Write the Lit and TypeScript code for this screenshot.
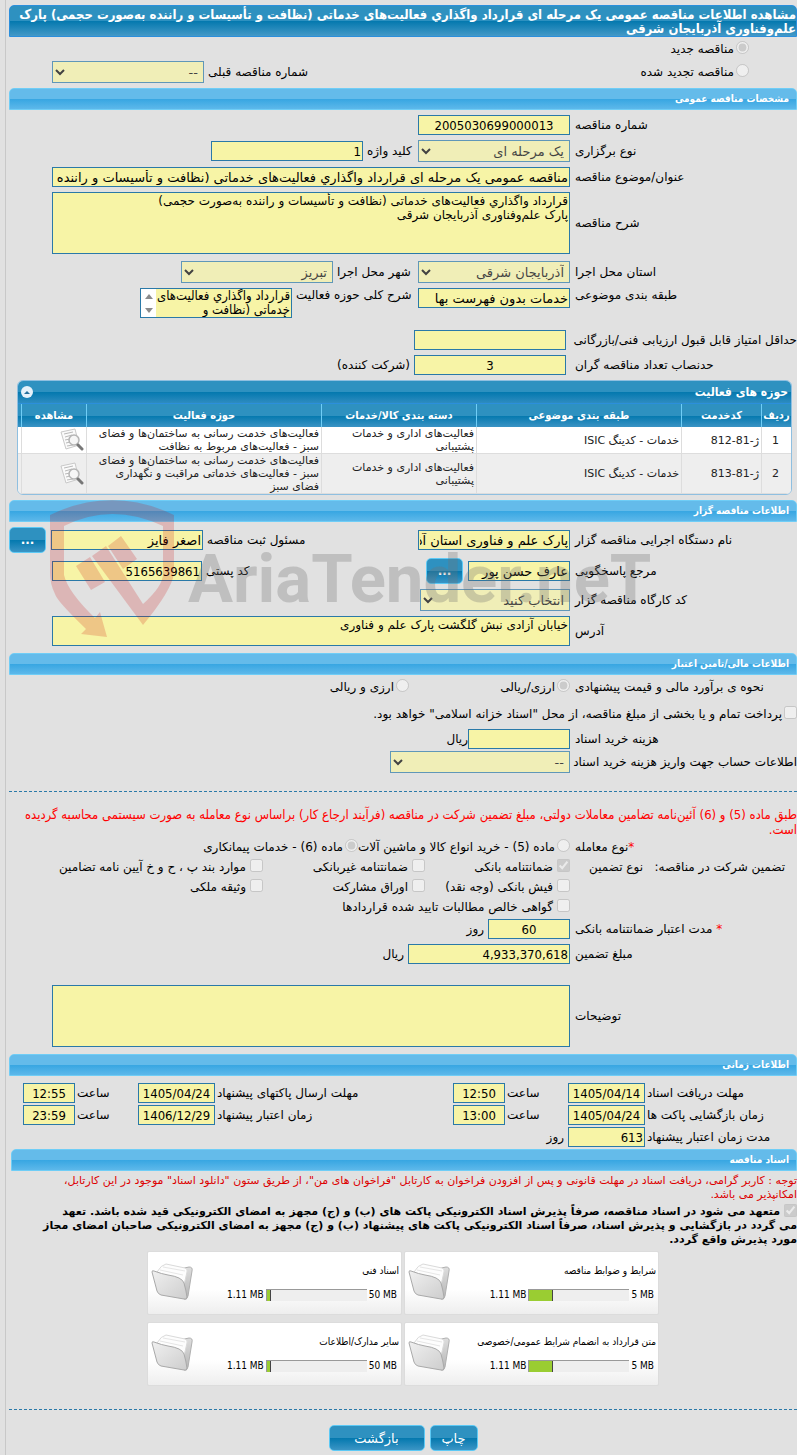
import { LitElement, html, css } from "lit";
import { customElement, property } from "lit/decorators.js";

const SUBJECT =
  "قرارداد واگذاري فعالیت‌های خدماتی (نظافت و تأسیسات و راننده به‌صورت حجمی)";
const PARK = "پارک علم‌وفناوری آذربایجان شرقی";

interface Activity {
  index: number;
  code: string;
  subject: string;
  category: string;
  field: string;
}

const activities: Activity[] = [
  {
    index: 1,
    code: "ژ-81-812",
    subject: "خدمات - کدینگ ISIC",
    category: "فعالیت‌های اداری و خدمات پشتیبانی",
    field: "فعالیت‌های خدمت رسانی به ساختمان‌ها و فضای سبز - فعالیت‌های مربوط به نظافت",
  },
  {
    index: 2,
    code: "ژ-81-813",
    subject: "خدمات - کدینگ ISIC",
    category: "فعالیت‌های اداری و خدمات پشتیبانی",
    field: "فعالیت‌های خدمت رسانی به ساختمان‌ها و فضای سبز - فعالیت‌های خدماتی مراقبت و نگهداری فضای سبز",
  },
];

interface Upload {
  title: string;
  used: number;
  limit: number;
}

const uploads: Upload[] = [
  { title: "شرایط و ضوابط مناقصه", used: 1.11, limit: 5 },
  { title: "اسناد فنی", used: 1.11, limit: 50 },
  { title: "متن قرارداد به انضمام شرایط عمومی/خصوصی", used: 1.11, limit: 5 },
  { title: "سایر مدارک/اطلاعات", used: 1.11, limit: 50 },
];

const folderIcon = html`
  <svg class="folder" viewBox="0 0 44 42" aria-hidden="true">
    <defs>
      <linearGradient id="front" x1="0" y1="0" x2="1" y2="1">
        <stop offset="0" stop-color="#f0f0f0" />
        <stop offset="1" stop-color="#cdcdcd" />
      </linearGradient>
      <linearGradient id="side" x1="0" y1="0" x2="0" y2="1">
        <stop offset="0" stop-color="#dedede" />
        <stop offset="1" stop-color="#b4b4b4" />
      </linearGradient>
    </defs>
    <path d="M29 7l9-2q4 0 3 4l-4 25q-1 4-4 3z" fill="url(#side)" stroke="#b0b0b0" />
    <path d="M6 10q4-7 9-8l19 4q3 1 2 4l-3 13z" fill="#fdfdfd" stroke="#dadada" />
    <path d="M9 8l23 5M12 5l22 4" stroke="#e6e6e6" fill="none" />
    <path
      d="M1 10q0-2 2-1q8 3 14 4q14 2 16 8q2 7 3 14q0 3-3 2L10 33q-3-1-4-4z"
      fill="url(#front)"
      stroke="#a9a9a9"
    />
  </svg>
`;

const viewIcon = html`
  <svg class="view-icon" viewBox="0 0 24 24" aria-hidden="true">
    <path d="M1 4l14-3 4 16-13 4z" fill="#fafafa" stroke="#c9c9c9" />
    <path d="M4 6l9-2M5 9l7-2M5 12l5-1M6 15l4-1M7 18l6-1" stroke="#b9b9b9" fill="none" />
    <circle cx="14" cy="12" r="5" fill="#f4f4f4" fill-opacity=".85" stroke="#b5b5b5" stroke-width="1.500" />
    <path d="M18 17l4 4" stroke="#777" stroke-width="3" stroke-linecap="round" />
  </svg>
`;

@customElement("section-bar")
export class SectionBar extends LitElement {
  @property() heading = "";

  static styles = css`
    :host {
      display: block;
      margin-top: 5px;
    }
    .bar {
      box-sizing: border-box;
      height: 22px;
      margin: 0;
      padding: 0 7px;
      border: 1px solid #6fcdf6;
      border-radius: 5px 5px 0 0;
      background: linear-gradient(#64bbea 0 50%, #37a6e2 50%, #5db8ea 100%);
      color: #fff;
      font-size: 10px;
      font-family: "DejaVu Sans Condensed", "DejaVu Sans", sans-serif;
      font-weight: bold;
      line-height: 20px;
    }
  `;

  render() {
    return html`<h2 class="bar">${this.heading}</h2>`;
  }
}

@customElement("app-root")
export class AppRoot extends LitElement {
  static styles = css`
    :host {
      --narrow: "DejaVu Sans Condensed", "DejaVu Sans", sans-serif;
      display: block;
      box-sizing: border-box;
      min-height: 100vh;
      padding-left: 5px;
      background: #e1e1e1;
      color: #000;
      direction: rtl;
      font-family: "DejaVu Sans", sans-serif;
      font-size: 12px;
    }
    .page {
      position: relative;
      box-sizing: border-box;
      min-height: 100vh;
      padding: 5px 0 5px 3px;
      border-left: 1px solid #c8c8c8;
      overflow: hidden;
    }
    .title {
      box-sizing: border-box;
      min-height: 32px;
      margin: 0;
      padding: 2px 0 0;
      border: 1px solid #2b8fdc;
      border-radius: 5px 5px 0 0;
      background: linear-gradient(#2e91c0 0 50%, #0378ae 50%, #4499c7 100%);
      color: #fff;
      font-family: var(--narrow);
      font-size: 13px;
      font-weight: bold;
      line-height: 14px;
    }
    .row {
      display: flex;
      align-items: center;
      min-height: 20px;
      margin-top: 5px;
      white-space: nowrap;
    }
    .top {
      align-items: flex-start;
    }
    .tight {
      margin-top: 2px;
    }
    .flat {
      margin-top: 0;
    }
    .loose {
      margin-top: 7px;
    }
    .wide {
      margin-top: 12px;
    }
    .spacious {
      margin-top: 21px;
    }
    .end {
      margin-bottom: 7px;
    }
    .lead {
      flex: none;
      width: 222px;
      margin-left: 5px;
      text-align: left;
    }
    .star {
      color: #f00;
    }
    .next {
      flex: none;
      margin-left: 4px;
      text-align: left;
    }
    .unit {
      margin-right: 4px;
    }
    .l51 {
      width: 51px;
    }
    .l82 {
      width: 81px;
    }
    .l122 {
      width: 122px;
    }
    .far {
      margin-right: auto;
    }
    input,
    select,
    textarea,
    button {
      box-sizing: border-box;
      font-family: inherit;
      margin: 0;
    }
    .box {
      flex: none;
      height: 20px;
      padding: 0 1px;
      border: 1px solid #2a79a8;
      border-radius: 0;
      background: #f7f4a6;
      color: #000;
      font-size: 13px;
      line-height: 14px;
      outline: none;
    }
    select.box {
      height: 22px;
    }
    textarea.box {
      display: block;
      resize: none;
      overflow: hidden;
      padding: 1px;
      font-size: 12px;
    }
    .scroll {
      box-sizing: border-box;
      display: flex;
      border: 1px solid #2a79a8;
    }
    .scroll textarea.box {
      flex: 1;
      min-width: 0;
      height: 28px;
      padding: 0 1px;
      border: 0;
      font-family: var(--narrow);
      font-size: 13px;
    }
    .track {
      display: flex;
      flex-direction: column;
      align-items: center;
      justify-content: space-between;
      box-sizing: border-box;
      width: 15px;
      padding: 5px 0 4px;
      background: #fff;
    }
    .arrow {
      width: 8px;
      height: 5px;
    }
    .center {
      text-align: center;
    }
    .number {
      font-family: var(--narrow);
    }
    .apart {
      margin-right: 4px;
    }
    .w82 {
      width: 82px;
    }
    .w102 {
      width: 102px;
    }
    .w150 {
      width: 150px;
    }
    .w152 {
      width: 152px;
    }
    .w162 {
      width: 162px;
    }
    .w180 {
      width: 180px;
    }
    .fill {
      flex: 1;
      min-width: 0;
      margin-left: 43px;
    }
    .h30 {
      height: 30px;
    }
    .h62 {
      height: 62px;
    }
    .edge {
      margin-left: 43px;
    }
    .tick {
      flex: none;
      width: 13px;
      height: 13px;
    }
    .option {
      display: flex;
      align-items: center;
      gap: 2px;
    }
    .option .tick {
      margin-bottom: 3px;
    }
    .currency .option {
      min-width: 161px;
    }
    .kind {
      padding-right: 48px;
    }
    .button {
      height: 26px;
      padding: 0;
      border: 1px solid #5cc9f5;
      border-radius: 5px;
      background: linear-gradient(#2e91c0 0 50%, #0378ae 50%, #3b95c5 100%);
      color: #fff;
      font-size: 13px;
    }
    .more {
      flex: none;
      width: 37px;
      margin-right: 5px;
      font-size: 12px;
      font-weight: bold;
    }
    .grid-panel {
      margin: 5px 5px 0 8px;
      border: 1px solid #8fbfe0;
      border-radius: 6px;
      overflow: hidden;
      background: #fff;
    }
    .grid-title {
      display: flex;
      align-items: center;
      justify-content: space-between;
      height: 22px;
      padding: 0 3px;
      border-bottom: 1px solid #2b8fdc;
      background: linear-gradient(#2e91c0 0 50%, #0378ae 50%, #2e8cc0 100%);
      color: #fff;
      font-family: var(--narrow);
      font-size: 12px;
      font-weight: bold;
    }
    .collapse {
      display: grid;
      place-items: center;
      width: 12px;
      height: 12px;
      padding: 0;
      border: 0;
      border-radius: 50%;
      background: #e6f1fa;
    }
    .collapse svg {
      width: 6px;
      height: 3px;
    }
    table {
      width: 100%;
      border-collapse: separate;
      border-spacing: 0;
      table-layout: fixed;
      font-size: 11px;
      line-height: 13px;
    }
    .grid-head {
      height: 23px;
      background: linear-gradient(#2e91c0 0 50%, #0378ae 50%, #3a93c4 100%);
      color: #fff;
      font-family: var(--narrow);
      line-height: 14px;
    }
    th {
      padding: 0;
      border-left: 1px solid #6fcdf6;
      white-space: nowrap;
    }
    td {
      padding: 0 2px 0 0;
      border-left: 1px solid #ddd;
      border-bottom: 1px solid #ddd;
      color: #222;
    }
    th:last-child,
    td:last-child {
      border-left: 0;
    }
    .even td {
      background: #eee;
    }
    .view-icon {
      display: block;
      width: 24px;
      height: 24px;
    }
    .c-index {
      width: 30px;
    }
    .c-code {
      width: 80px;
    }
    .c-subject {
      width: 205px;
    }
    .c-category {
      width: 155px;
    }
    .c-view {
      width: 65px;
    }
    .c-spare {
      width: 3px;
    }
    .rule {
      height: 0;
      margin: 0;
      border: 0;
      border-top: 1px dashed #2a79a8;
    }
    .account {
      margin-bottom: 18px;
    }
    .notice {
      margin: 15px 0 0;
      color: #f00;
      font-family: var(--narrow);
      font-size: 13px;
      line-height: 15px;
    }
    .caution {
      margin: 3px 0 2px;
      color: #d00;
      font-size: 11px;
      line-height: 14px;
    }
    .pledge {
      margin: 0 0 4px;
      font-size: 11px;
      font-weight: bold;
      line-height: 14px;
    }
    .pledge .tick {
      vertical-align: -2px;
    }
    .guarantee {
      display: grid;
      grid-template-columns: 137px 85px 145px 162px 1fr;
      grid-auto-rows: 20px;
      align-items: center;
      white-space: nowrap;
    }
    .guarantee-head {
      padding-right: 12px;
    }
    .guarantee-kind {
      padding-right: 17px;
    }
    .guarantee .option {
      margin-right: 5px;
      margin-left: -5px;
      gap: 4px;
    }
    .second {
      grid-column-start: 3;
    }
    .third {
      grid-column: 3 / -1;
    }
    .times {
      display: grid;
      grid-template-columns: 150px 77px 59px 52px 1fr 77px 59px 52px;
      gap: 2px;
      margin: 7px 0 0 14px;
      align-items: center;
      text-align: left;
      white-space: nowrap;
    }
    .times .number {
      width: 100%;
    }
    .times .plain {
      text-align: right;
    }
    .times .unit {
      text-align: right;
      margin-right: 2px;
    }
    .last-bar {
      margin-top: 2px;
      margin-left: 2px;
    }
    .files {
      display: grid;
      grid-template-columns: 255px 255px;
      justify-content: center;
      gap: 7px 2px;
      margin: 0 0 23px;
      padding: 0;
      list-style: none;
    }
    .card {
      display: flex;
      align-items: center;
      justify-content: space-between;
      box-sizing: border-box;
      height: 64px;
      padding: 0 2px 0 3px;
      border: 1px solid #dcdcdc;
      border-radius: 2px;
      background: linear-gradient(#fff 60%, #eee);
      font-family: var(--narrow);
      font-size: 10px;
    }
    .folder {
      flex: none;
      width: 44px;
      height: 42px;
    }
    .card-body {
      display: grid;
      gap: 13px;
      white-space: nowrap;
    }
    .usage {
      display: flex;
      align-items: center;
      gap: 2px;
      direction: ltr;
      justify-content: flex-end;
      margin-right: 2px;
      line-height: 12px;
    }
    .meter {
      box-sizing: border-box;
      width: 101px;
      height: 12px;
      border-top: 1px solid #999;
      border-left: 1px solid #999;
      background: #eee;
    }
    .level {
      box-sizing: border-box;
      height: 11px;
      border-right: 1px solid #444;
      background: #9acd32;
    }
    .actions {
      display: flex;
      justify-content: center;
      gap: 5px;
      margin-top: 15px;
    }
    .print {
      width: 48px;
    }
    .back {
      width: 96px;
    }
    .watermark {
      position: absolute;
      top: 500px;
      left: 44px;
      width: 620px;
      height: 144px;
      pointer-events: none;
      direction: ltr;
    }
    .watermark-text {
      font-family: Roboto, sans-serif;
      font-size: 67px;
      font-weight: bold;
    }
  `;

  private radio(id: string, name: string, text: string, checked = false) {
    return html`<span class="option"
      ><input class="tick" type="radio" id=${id} name=${name} ?checked=${checked} disabled /><label for=${id}
        >${text}</label
      ></span
    >`;
  }

  private check(id: string, text: string, checked = false, cls = "") {
    return html`<span class="option ${cls}"
      ><input class="tick" type="checkbox" id=${id} ?checked=${checked} disabled /><label for=${id}>${text}</label></span
    >`;
  }

  private label(id: string, text: string, cls = "lead") {
    return html`<label class=${cls} for=${id}>${text}</label>`;
  }

  private box(id: string, value: string, cls: string) {
    return html`<input class="box ${cls}" id=${id} type="text" .value=${value} readonly />`;
  }

  private drop(id: string, value: string, cls: string) {
    return html`<select class="box ${cls}" id=${id} disabled>
      <option>${value}</option>
    </select>`;
  }

  private more() {
    return html`<button class="button more" type="button" aria-label="انتخاب">...</button>`;
  }

  private renderActivities() {
    return html`<section class="grid-panel">
      <div class="grid-title">
        <span>حوزه های فعالیت</span>
        <button class="collapse" type="button" aria-label="بستن">
          <svg viewBox="0 0 6 3"><path d="M0 3L3 0l3 3z" fill="#256f9c" /></svg>
        </button>
      </div>
      <table>
        <colgroup>
          <col class="c-index" />
          <col class="c-code" />
          <col class="c-subject" />
          <col class="c-category" />
          <col />
          <col class="c-view" />
          <col class="c-spare" />
        </colgroup>
        <thead>
          <tr class="grid-head">
            <th>ردیف</th>
            <th>کدخدمت</th>
            <th>طبقه بندی موضوعی</th>
            <th>دسته بندی کالا/خدمات</th>
            <th>حوزه فعالیت</th>
            <th>مشاهده</th>
            <th></th>
          </tr>
        </thead>
        <tbody>
          ${activities.map(
            (a) => html`<tr class=${a.index % 2 ? "odd" : "even"}>
              <td class="center">${a.index}</td>
              <td>${a.code}</td>
              <td>${a.subject}</td>
              <td>${a.category}</td>
              <td>${a.field}</td>
              <td>${viewIcon}</td>
              <td></td>
            </tr>`
          )}
        </tbody>
      </table>
    </section>`;
  }

  private renderUpload(u: Upload) {
    return html`<li class="card">
      <div class="card-body">
        <span>${u.title}</span>
        <span class="usage">
          <span>${u.used} MB</span>
          <span class="meter"><div class="level" style="width:${Math.round((u.used / u.limit) * 100) + 2}%"></div></span>
          <span>${u.limit} MB</span>
        </span>
      </div>
      ${folderIcon}
    </li>`;
  }

  private renderWatermark() {
    return html`<svg class="watermark" viewBox="0 0 620 144" aria-hidden="true">
      <g fill="#c80000" fill-opacity=".19">
        <path
          d="M0 15Q62-15 124 15V73Q122 90 93 125L42 56 56 46 93 104Q113 86 113 74V26Q62 2 14 26V75Q18 92 45 118L50 112 57 137 31 134 36 129Q6 100 5 94Q0 84 0 73Z"
        />
        <path d="M26 66L40 57 55 82 41 90ZM58 46L71 36 87 59 73 69Z" />
      </g>
      <text class="watermark-text" x="138" y="102" fill="#707070" fill-opacity=".3">AriaTender.neT</text>
    </svg>`;
  }

  render() {
    return html`<main class="page">
      <h1 class="title">مشاهده اطلاعات مناقصه عمومی یک مرحله ای ${SUBJECT} ${PARK}</h1>

      <div class="row tight kind">${this.radio("new", "kind", "مناقصه جدید", true)}</div>
      <div class="row tight kind">
        ${this.radio("renewed", "kind", "مناقصه تجدید شده")} ${this.label("prev", "شماره مناقصه قبلی", "next far")}
        ${this.drop("prev", "--", "w152 edge")}
      </div>

      <section-bar heading="مشخصات مناقصه عمومی"></section-bar>
      <div class="row">
        ${this.label("number", "شماره مناقصه")} ${this.box("number", "2005030699000013", "w152 center number")}
      </div>
      <div class="row">
        ${this.label("type", "نوع برگزاری")} ${this.drop("type", "یک مرحله ای", "w152")}
        ${this.label("keyword", "کلید واژه", "next l51")} ${this.box("keyword", "1", "w152 number")}
      </div>
      <div class="row">
        ${this.label("subject", "عنوان/موضوع مناقصه")}
        ${this.box("subject", "مناقصه عمومی یک مرحله ای " + SUBJECT, "fill")}
      </div>
      <div class="row">
        ${this.label("description", "شرح مناقصه")}
        <textarea class="box fill h62" id="description" readonly .value=${SUBJECT + "\n" + PARK}></textarea>
      </div>
      <div class="row loose">
        ${this.label("province", "استان محل اجرا")} ${this.drop("province", "آذربایجان شرقی", "w152")}
        ${this.label("city", "شهر محل اجرا", "next l82")} ${this.drop("city", "تبریز", "w152")}
      </div>
      <div class="row top">
        ${this.label("category", "طبقه بندی موضوعی")} ${this.box("category", "خدمات بدون فهرست بها", "w152")}
        ${this.label("scope", "شرح کلی حوزه فعالیت", "next l122")}
        <div class="scroll w152">
          <textarea class="box" id="scope" readonly .value=${SUBJECT}></textarea>
          <span class="track">
            <svg class="arrow" viewBox="0 0 8 5"><path d="M0 5L4 0l4 5z" fill="#8b8b8b" /></svg>
            <svg class="arrow" viewBox="0 0 8 5"><path d="M0 0h8L4 5z" fill="#8b8b8b" /></svg>
          </span>
        </div>
      </div>
      <div class="row wide">
        ${this.label("score", "حداقل امتیاز قابل قبول ارزیابی فنی/بازرگانی")} ${this.box("score", "", "w152 apart")}
      </div>
      <div class="row">
        ${this.label("quorum", "حدنصاب تعداد مناقصه گران")} ${this.box("quorum", "3", "w152 apart center number")}
        <span class="unit">(شرکت کننده)</span>
      </div>

      ${this.renderActivities()}

      <section-bar heading="اطلاعات مناقصه گزار"></section-bar>
      <div class="row">
        ${this.label("agency", "نام دستگاه اجرایی مناقصه گزار")}
        ${this.box("agency", "پارک علم و فناوری استان آذربایجان شرقی", "w152")}
        ${this.label("registrar", "مسئول ثبت مناقصه", "next far")} ${this.box("registrar", "اصغر فایز", "w152")}
        ${this.more()}
      </div>
      <div class="row">
        ${this.label("contact", "مرجع پاسخگویی")} ${this.box("contact", "عارف حسن پور", "w102")} ${this.more()}
        ${this.label("postal", "کد پستی", "next far")} ${this.box("postal", "5165639861", "w150 edge number")}
      </div>
      <div class="row">
        ${this.label("workshop", "کد کارگاه مناقصه گزار")} ${this.drop("workshop", "انتخاب کنید", "w150")}
      </div>
      <div class="row end">
        ${this.label("address", "آدرس")}
        <textarea
          class="box fill h30"
          id="address"
          readonly
          .value=${"خیابان آزادی نبش گلگشت پارک علم و فناوری"}
        ></textarea>
      </div>

      <section-bar heading="اطلاعات مالی/تامین اعتبار"></section-bar>
      <div class="row tight currency">
        <span class="lead">نحوه ی برآورد مالی و قیمت پیشنهادی</span>
        ${this.radio("rial", "currency", "ارزی/ریالی", true)} ${this.radio("both", "currency", "ارزی و ریالی")}
      </div>
      <div class="row loose">
        ${this.check(
          "treasury",
          "پرداخت تمام و یا بخشی از مبلغ مناقصه، از محل \"اسناد خزانه اسلامی\" خواهد بود."
        )}
      </div>
      <div class="row">
        ${this.label("fee", "هزینه خرید اسناد")} ${this.box("fee", "", "w102")} <span>ریال</span>
      </div>
      <div class="row tight account">
        ${this.label("account", "اطلاعات حساب جهت واریز هزینه خرید اسناد")} ${this.drop("account", "--", "w180")}
      </div>
      <hr class="rule" />
      <p class="notice">
        طبق ماده (5) و (6) آئین‌نامه تضامین معاملات دولتی، مبلغ تضمین شرکت در مناقصه (فرآیند ارجاع کار) براساس نوع معامله
        به صورت سیستمی محاسبه گردیده است.
      </p>
      <div class="row flat">
        <span class="lead"><span class="star">*</span>نوع معامله</span>
        ${this.radio("m5", "deal", "ماده (5) - خرید انواع کالا و ماشین آلات")}
        ${this.radio("m6", "deal", "ماده (6) - خدمات پیمانکاری", true)}
      </div>
      <div class="guarantee">
        <span class="guarantee-head">تضمین شرکت در مناقصه:</span>
        <span class="guarantee-kind">نوع تضمین</span>
        ${this.check("g1", "ضمانتنامه بانکی", true)} ${this.check("g2", "ضمانتنامه غیربانکی")}
        ${this.check("g3", "موارد بند پ ، ح و خ آیین نامه تضامین")}
        ${this.check("g4", "فیش بانکی (وجه نقد)", false, "second")} ${this.check("g5", "اوراق مشارکت")}
        ${this.check("g6", "وثیقه ملکی")} ${this.check("g7", "گواهی خالص مطالبات تایید شده قراردادها", false, "third")}
      </div>
      <div class="row tight">
        <label class="lead" for="validity"><span class="star">*</span> مدت اعتبار ضمانتنامه بانکی</label>
        ${this.box("validity", "60", "w82 center number")} <span class="unit">روز</span>
      </div>
      <div class="row">
        ${this.label("amount", "مبلغ تضمین")} ${this.box("amount", "4,933,370,618", "w162 number")}
        <span class="unit">ریال</span>
      </div>
      <div class="row spacious end">
        ${this.label("notes", "توضیحات")}
        <textarea class="box fill h62" id="notes" readonly></textarea>
      </div>

      <section-bar heading="اطلاعات زمانی"></section-bar>
      <div class="times">
        ${this.label("t1", "مهلت دریافت اسناد", "")} ${this.box("t1", "1405/04/14", "center number")}
        ${this.label("h1", "ساعت", "")} ${this.box("h1", "12:50", "center number")}
        ${this.label("t2", "مهلت ارسال پاکتهای پیشنهاد", "")} ${this.box("t2", "1405/04/24", "center number")}
        ${this.label("h2", "ساعت", "")} ${this.box("h2", "12:55", "center number")}
        ${this.label("t3", "زمان بازگشایی پاکت ها", "")} ${this.box("t3", "1405/04/24", "center number")}
        ${this.label("h3", "ساعت", "")} ${this.box("h3", "13:00", "center number")}
        ${this.label("t4", "زمان اعتبار پیشنهاد", "")} ${this.box("t4", "1406/12/29", "center number")}
        ${this.label("h4", "ساعت", "")} ${this.box("h4", "23:59", "center number")}
        ${this.label("t5", "مدت زمان اعتبار پیشنهاد", "")} ${this.box("t5", "613", "plain number")}
        <span class="unit">روز</span>
      </div>

      <section-bar class="last-bar" heading="اسناد مناقصه"></section-bar>
      <p class="caution">
        توجه : کاربر گرامی، دریافت اسناد در مهلت قانونی و پس از افزودن فراخوان به کارتابل "فراخوان های من"، از طریق ستون
        "دانلود اسناد" موجود در این کارتابل،<br />امکانپذیر می باشد.
      </p>
      <p class="pledge">
        <input class="tick" type="checkbox" id="pledge" checked disabled />
        <label for="pledge"
          >متعهد می شود در اسناد مناقصه، صرفاً پذیرش اسناد الکترونیکی پاکت های (ب) و (ج) مجهز به امضای الکترونیکی قید شده
          باشد. تعهد<br />می گردد در بازگشایی و پذیرش اسناد، صرفاً اسناد الکترونیکی پاکت های پیشنهاد (ب) و (ج) مجهز به
          امضای الکترونیکی صاحبان امضای مجاز<br />مورد پذیرش واقع گردد.</label
        >
      </p>
      <ul class="files">
        ${uploads.map((u) => this.renderUpload(u))}
      </ul>
      <hr class="rule" />
      <div class="actions">
        <button class="button print" type="button">چاپ</button>
        <button class="button back" type="button">بازگشت</button>
      </div>
      ${this.renderWatermark()}
    </main>`;
  }
}
